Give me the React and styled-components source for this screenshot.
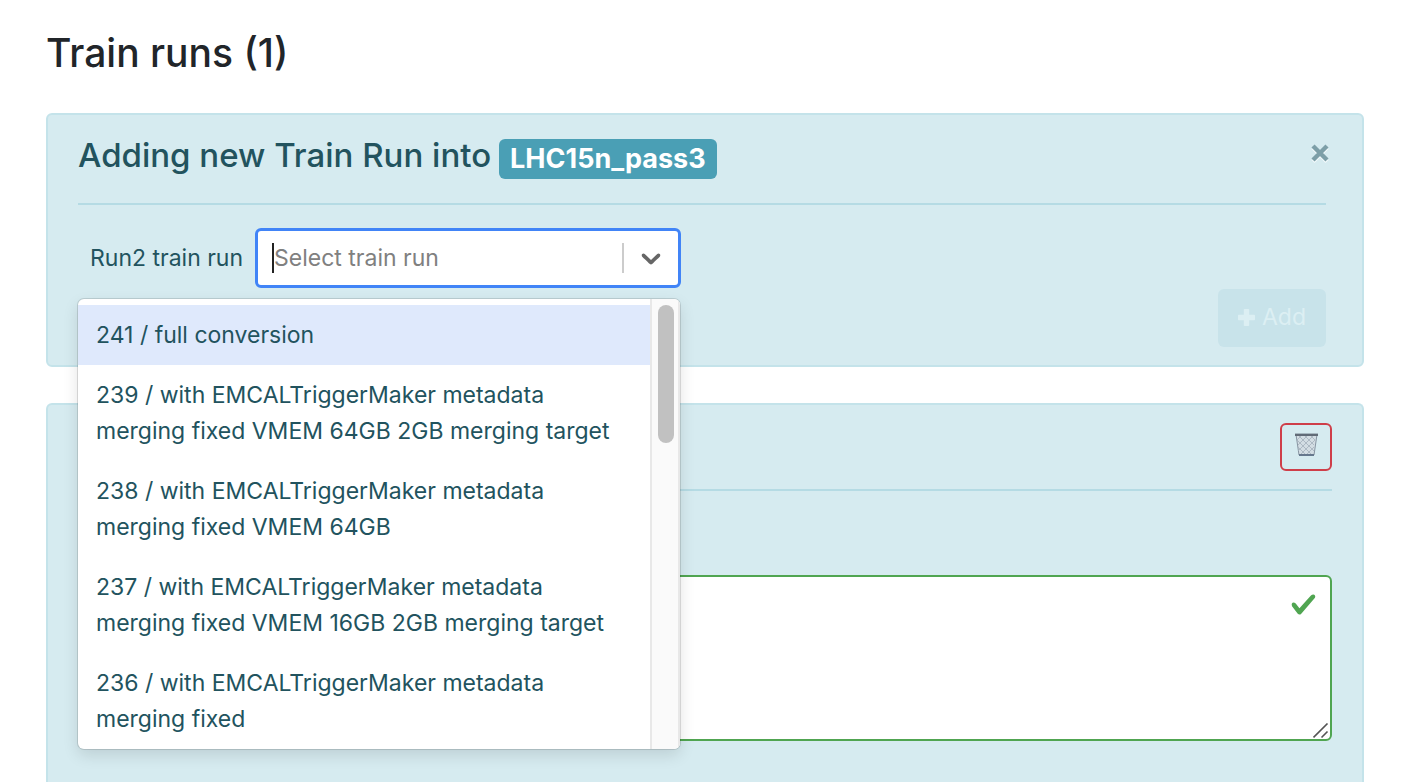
import React from "react";
import styled, { createGlobalStyle } from "styled-components";

const Global = createGlobalStyle`
  *, *::before, *::after { box-sizing: border-box; }
  body {
    margin: 0;
    background: #fff;
    color: #212529;
    font-family: Inter, "Liberation Sans", sans-serif;
    font-size: 23px;
    line-height: 36px;
  }
  h1, h2 { margin: 0; font-weight: 500; }
  button, input, textarea { font: inherit; color: inherit; margin: 0; }
`;

const Page = styled.main`
  display: flex;
  flex-direction: column;
  min-height: 100vh;
  padding: 28px 42px 0 46px;
`;

const Title = styled.h1`
  font-size: 39px;
  line-height: 50px;
  margin-bottom: 35px;
`;

const Card = styled.section`
  border: 2px solid #c4e3ea;
  border-radius: 6px;
  background: #d6ebf0;
  color: #22535e;
`;

const NewRunCard = styled(Card)`
  padding: 18px 36px 18px 30px;
  margin-bottom: 36px;
`;

const RunCard = styled(Card)`
  flex: 1;
  padding: 18px 30px 41px;
  border-bottom: 0;
  border-radius: 6px 6px 0 0;
`;

const Header = styled.header`
  display: flex;
  justify-content: ${(p) => (p.$end ? "flex-end" : "space-between")};
  align-items: flex-start;
  padding-bottom: ${(p) => (p.$end ? 18 : 24)}px;
  border-bottom: 2px solid #b5dbe4;
`;

const Heading = styled.h2`
  display: flex;
  align-items: flex-start;
  gap: 8px;
  font-size: 33px;
  line-height: 44px;
`;

const Badge = styled.span`
  margin-top: 6px;
  padding: 0 11px;
  border-radius: 6px;
  background: #4a9fb5;
  color: #fff;
  font-size: 27px;
  font-weight: 700;
  line-height: 40px;
`;

const CloseButton = styled.button`
  display: flex;
  margin: 10px -4px 0 0;
  padding: 0;
  border: 0;
  background: none;
`;

const FieldRow = styled.div`
  display: flex;
  align-items: center;
  gap: 12px;
  margin-top: 23px;
  padding-left: 12px;
  position: relative;
`;

const Control = styled.div`
  display: flex;
  align-items: center;
  width: 426px;
  height: 60px;
  padding-left: 14px;
  border: 3px solid #4184f7;
  border-radius: 6px;
  background: #fff;
`;

const Caret = styled.span`
  width: 2px;
  height: 30px;
  background: #222;
`;

const SearchInput = styled.input`
  flex: 1;
  min-width: 0;
  padding: 0;
  border: 0;
  outline: 0;
  background: none;
  &::placeholder { color: #808080; opacity: 1; }
`;

const Separator = styled.span`
  width: 2px;
  height: 30px;
  background: #ccc;
`;

const DropButton = styled.button`
  display: flex;
  padding: 0 11px;
  border: 0;
  background: none;
`;

const Menu = styled.div`
  position: absolute;
  top: 71px;
  left: 0;
  z-index: 1;
  display: flex;
  width: 602px;
  height: 450px;
  overflow: hidden;
  border-radius: 6px;
  background: #fff;
  box-shadow: 0 0 0 1px rgba(0, 0, 0, 0.12), 0 6px 16px rgba(0, 0, 0, 0.12);
`;

const Options = styled.ul`
  flex: 1;
  margin: 0;
  padding: 6px 0 0;
  list-style: none;
`;

const Option = styled.li`
  padding: 12px 36px 12px 18px;
  background: ${(p) => (p.$active ? "#dfe9fc" : "transparent")};
`;

const Track = styled.div`
  width: 30px;
  padding: 6px 4px 0 6px;
  border: solid #e8e8e8;
  border-width: 0 2px;
  background: #fafafa;
`;

const Thumb = styled.div`
  width: 16px;
  height: 138px;
  border-radius: 8px;
  background: #c1c1c1;
`;

const Actions = styled.div`
  display: flex;
  justify-content: flex-end;
  margin-top: 1px;
`;

const AddButton = styled.button`
  display: flex;
  align-items: center;
  gap: 7px;
  height: 58px;
  padding: 0 20px 2px;
  border: 0;
  border-radius: 6px;
  background: #c8e3ea;
  &:disabled { color: #dceff3; }
`;

const TrashButton = styled.button`
  display: flex;
  align-items: center;
  justify-content: center;
  width: 52px;
  height: 48px;
  padding: 0 0 4px;
  border: 2px solid #cf3e49;
  border-radius: 6px;
  background: none;
`;

const CommentField = styled.div`
  margin-top: 84px;
  position: relative;
`;

const Comment = styled.textarea`
  display: block;
  width: 100%;
  height: 166px;
  padding: 9px 18px;
  border: 2px solid #50a551;
  border-radius: 6px;
  background: #fff;
  outline: 0;
  resize: none;
`;

const ValidMark = styled.svg`
  position: absolute;
  top: 16px;
  right: 15px;
`;

const Grip = styled.svg`
  position: absolute;
  right: 3px;
  bottom: 2px;
`;

const runs = [
  "241 / full conversion",
  "239 / with EMCALTriggerMaker metadata merging fixed VMEM 64GB 2GB merging target",
  "238 / with EMCALTriggerMaker metadata merging fixed VMEM 64GB",
  "237 / with EMCALTriggerMaker metadata merging fixed VMEM 16GB 2GB merging target",
  "236 / with EMCALTriggerMaker metadata merging fixed",
];

function CrossIcon() {
  return (
    <svg width="20" height="21" viewBox="0 0 20 21" fill="none" strokeWidth="4.4">
      <path d="M3 4.500l14 14M17 4.500l-14 14" stroke="#f2f9fb" />
      <path d="M3 3l14 14M17 3l-14 14" stroke="#7d9fa8" />
    </svg>
  );
}

function ChevronIcon() {
  return (
    <svg width="32" height="32" viewBox="0 0 20 20" fill="#666">
      <path d="M4.516 7.548c0.436-0.446 1.043-0.481 1.576 0l3.908 3.747 3.908-3.747c0.533-0.481 1.141-0.446 1.574 0 0.436 0.445 0.408 1.197 0 1.615-0.406 0.418-4.695 4.502-4.695 4.502-0.217 0.223-0.502 0.335-0.787 0.335s-0.57-0.112-0.789-0.335c0 0-4.287-4.084-4.695-4.502s-0.436-1.17 0-1.615z" />
    </svg>
  );
}

function PlusIcon() {
  return (
    <svg width="17" height="17" viewBox="0 0 17 17" fill="currentColor">
      <path d="M6.5 0h4a.7.7 0 0 1 .7.7v5.1h5.1a.7.7 0 0 1 .7.7v4a.7.7 0 0 1-.7.7h-5.1v5.1a.7.7 0 0 1-.7.7h-4a.7.7 0 0 1-.7-.7v-5.1H.7a.7.7 0 0 1-.7-.7v-4a.7.7 0 0 1 .7-.7h5.1V.7a.7.7 0 0 1 .7-.7z" />
    </svg>
  );
}

function BinIcon() {
  return (
    <svg width="24" height="24" viewBox="0 0 24 24">
      <path d="M2 1.500h21l-3 20.500H5z" fill="#d3dde3" stroke="#8895a2" />
      <path d="M3 7l4-4M4 12l9-9M4 18L19 3M6 22L21 7M12 22l8-8M21 7l-4-4M20 12l-9-9M20 18L5 3M18 22L3 7M12 22l-8-8" stroke="#a3b0bb" strokeWidth=".8" fill="none" />
      <path d="M5 22h15" stroke="#66788d" strokeWidth="2" />
      <path d="M1 1.800h23" stroke="#616b77" strokeWidth="2.400" />
    </svg>
  );
}

export default function App() {
  return (
    <>
      <Global />
      <Page>
        <Title>Train runs (1)</Title>
        <NewRunCard>
          <Header>
            <Heading>
              Adding new Train Run into <Badge>LHC15n_pass3</Badge>
            </Heading>
            <CloseButton aria-label="Close">
              <CrossIcon />
            </CloseButton>
          </Header>
          <FieldRow>
            <label htmlFor="train-run">Run2 train run</label>
            <Control>
              <Caret />
              <SearchInput
                id="train-run"
                role="combobox"
                aria-expanded="true"
                aria-controls="train-run-options"
                placeholder="Select train run"
              />
              <Separator />
              <DropButton aria-label="Toggle options">
                <ChevronIcon />
              </DropButton>
            </Control>
            <Menu>
              <Options id="train-run-options" role="listbox">
                {runs.map((run, i) => (
                  <Option key={run} role="option" aria-selected={i === 0} $active={i === 0}>
                    {run}
                  </Option>
                ))}
              </Options>
              <Track>
                <Thumb />
              </Track>
            </Menu>
          </FieldRow>
          <Actions>
            <AddButton disabled>
              <PlusIcon />
              Add
            </AddButton>
          </Actions>
        </NewRunCard>
        <RunCard>
          <Header $end>
            <TrashButton aria-label="Delete train run">
              <BinIcon />
            </TrashButton>
          </Header>
          <CommentField>
            <Comment aria-label="Comment" />
            <ValidMark width="27" height="27" viewBox="0 0 8 8" fill="#50a551">
              <path d="M2.3 6.73L.6 4.53c-.4-1.04.46-1.4 1.1-.8l1.1 1.4 3.4-3.8c.6-.63 1.6-.27 1.2.7l-4 4.6c-.43.5-.8.4-1.1.1z" />
            </ValidMark>
            <Grip width="16" height="16" viewBox="0 0 16 16" stroke="#555" strokeWidth="1.600">
              <path d="M.5 14.500l14-14M8.500 14.500l6-6" />
            </Grip>
          </CommentField>
        </RunCard>
      </Page>
    </>
  );
}
